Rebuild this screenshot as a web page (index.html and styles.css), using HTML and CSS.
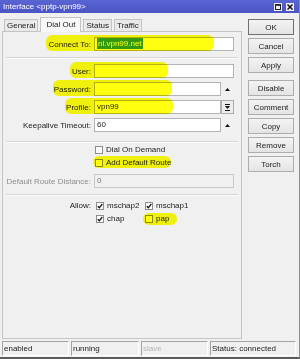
FILE: index.html
```html
<!DOCTYPE html>
<html>
<head>
<meta charset="utf-8">
<link rel="stylesheet" href="styles.css">
</head>
<body>
<div class="win">
  <div class="titlebar">
    <span class="title">Interface &lt;pptp-vpn99&gt;</span>
    <span class="wbtns">
      <span class="wb"><svg width="6" height="6" viewBox="0 0 6 6"><rect x="0.5" y="0.5" width="5" height="5" fill="none" stroke="#222" stroke-width="1"/><line x1="0" y1="1.2" x2="6" y2="1.2" stroke="#222" stroke-width="1.2"/></svg></span>
      <span class="wb"><svg width="6" height="6" viewBox="0 0 6 6"><path d="M0.5 0.5 L5.5 5.5 M5.5 0.5 L0.5 5.5" stroke="#111" stroke-width="1.5"/></svg></span>
    </span>
  </div>
  <div class="body">
    <div class="left">
      <div class="tabs">
        <span class="tab">General</span>
        <span class="tab sel">Dial Out</span>
        <span class="tab">Status</span>
        <span class="tab">Traffic</span>
      </div>
      <div class="panel">
        <div class="row first">
          <span class="lbl">Connect To:</span>
          <span class="inp"><span class="selx">nl.vpn99.net</span></span>
        </div>
        <div class="sep sep1"></div>
        <div class="row r-user">
          <span class="lbl">User:</span>
          <span class="inp"></span>
        </div>
        <div class="row">
          <span class="lbl">Password:</span>
          <span class="inp short"></span>
          <span class="aux"><svg width="5" height="3" viewBox="0 0 5 3"><path d="M0 3 L2.5 0 L5 3 Z" fill="#111"/></svg></span>
        </div>
        <div class="row">
          <span class="lbl">Profile:</span>
          <span class="inp short">vpn99</span>
          <span class="aux abtn"><svg width="5" height="7" viewBox="0 0 5 7"><rect x="0" y="0" width="5" height="1" fill="#111"/><path d="M0 2 L5 2 L2.5 5 Z" fill="#111"/><rect x="0" y="6" width="5" height="1" fill="#111"/></svg></span>
        </div>
        <div class="row">
          <span class="lbl">Keepalive Timeout:</span>
          <span class="inp short">60</span>
          <span class="aux"><svg width="5" height="3" viewBox="0 0 5 3"><path d="M0 3 L2.5 0 L5 3 Z" fill="#111"/></svg></span>
        </div>
        <div class="sep sep2"></div>
        <div class="cbrow">
          <span class="cb"></span><span>Dial On Demand</span>
        </div>
        <div class="cbrow">
          <span class="cb"></span><span>Add Default Route</span>
        </div>
        <div class="row r-drd">
          <span class="lbl dim">Default Route Distance:</span>
          <span class="inp dis">0</span>
        </div>
        <div class="sep sep3"></div>
        <div class="allow">
          <span class="lbl albl">Allow:</span>
          <div class="cbgrid">
            <span class="cbi"><span class="cb"><svg width="6" height="6" viewBox="0 0 6 6"><path d="M0.8 3.2 L2.3 4.8 L5.3 1" fill="none" stroke="#111" stroke-width="1.3"/></svg></span>mschap2</span>
            <span class="cbi"><span class="cb"><svg width="6" height="6" viewBox="0 0 6 6"><path d="M0.8 3.2 L2.3 4.8 L5.3 1" fill="none" stroke="#111" stroke-width="1.3"/></svg></span>mschap1</span>
            <span class="cbi"><span class="cb"><svg width="6" height="6" viewBox="0 0 6 6"><path d="M0.8 3.2 L2.3 4.8 L5.3 1" fill="none" stroke="#111" stroke-width="1.3"/></svg></span>chap</span>
            <span class="cbi"><span class="cb"></span>pap</span>
          </div>
        </div>
      </div>
    </div>
    <div class="side">
      <span class="btn def">OK</span>
      <span class="btn">Cancel</span>
      <span class="btn">Apply</span>
      <span class="btn gapb">Disable</span>
      <span class="btn">Comment</span>
      <span class="btn">Copy</span>
      <span class="btn">Remove</span>
      <span class="btn">Torch</span>
    </div>
  </div>
  <div class="status">
    <span class="seg s1">enabled</span>
    <span class="seg s2">running</span>
    <span class="seg s3 dimt">slave</span>
    <span class="seg s4">Status: connected</span>
  </div>
  <span class="mark m-connect"></span>
  <span class="mark m-user"></span>
  <span class="mark m-pass"></span>
  <span class="mark m-prof"></span>
  <span class="mark m-route"></span>
  <span class="mark m-pap"></span>
</div>
</body>
</html>
```
FILE: styles.css
```css
* { box-sizing: border-box; }
html, body { margin: 0; padding: 0; }
body {
  width: 300px;
  height: 359px;
  overflow: hidden;
  background: #f0f0f0;
  font-family: "Liberation Sans", Arial, sans-serif;
  font-size: 8px;
  color: #1c1c1c;
}
.win {
  position: relative;
  width: 300px;
  height: 359px;
  background: #f0f0f0;
  border-bottom: 2px solid #5c5c5c;
  border-right: 1px solid #8c8c8c;
  display: flex;
  flex-direction: column;
  isolation: isolate;
}
.titlebar {
  height: 13px;
  flex: none;
  background: linear-gradient(#5b64d3, #4a55c3);
  color: #fff;
  display: flex;
  align-items: center;
  padding-left: 3px;
  line-height: 13px;
}
.title { flex: 1; }
.wbtns { display: flex; gap: 4px; margin-right: 5px; }
.wb {
  width: 8px;
  height: 8px;
  background: #ececf2;
  display: flex;
  align-items: center;
  justify-content: center;
}
.body { display: flex; height: 327px; flex: none; }
.left {
  width: 242px;
  padding-left: 2px;
  display: flex;
  flex-direction: column;
}
.tabs {
  height: 18px;
  display: flex;
  align-items: flex-end;
  padding-left: 2px;
  gap: 2px;
}
.tab {
  height: 12px;
  line-height: 11px;
  padding: 0 2px;
  border: 1px solid #c3c3c3;
  border-bottom: none;
  background: #e9e9e9;
}
.tab.sel {
  height: 15px;
  margin-bottom: -1px;
  padding: 1px 5px 0;
  background: #f8f8f8;
  position: relative;
  z-index: 1;
}
.panel {
  height: 308px;
  border: 1px solid #c4c4c4;
  background: #f0f0f0;
  padding: 5px 0 0 0;
}
.row {
  display: flex;
  align-items: center;
  height: 14px;
  margin-top: 4px;
}
.row.first { margin-top: 0; }
.row.r-user { margin-top: 5px; }
.row.r-drd { margin-top: 5px; }
.lbl {
  width: 88px;
  margin-right: 3px;
  text-align: right;
  white-space: nowrap;
}
.lbl.dim { color: #8e8e8e; }
.inp {
  width: 140px;
  height: 14px;
  background: #fff;
  border: 1px solid #b3b3b3;
  padding-left: 2px;
  line-height: 12px;
  white-space: nowrap;
}
.inp.short { width: 127px; }
.inp.dis { background: #f0f0f0; border-color: #c8c8c8; color: #7a7a7a; }
.selx {
  background: #3399ff;
  color: #fff;
  padding: 0 1px;
  display: inline-block;
  line-height: 11px;
}
.aux {
  width: 13px;
  height: 14px;
  display: flex;
  align-items: center;
  justify-content: center;
}
.aux.abtn {
  border: 1px solid #adadad;
  background: #ececec;
}
.sep {
  height: 2px;
  border-top: 1px solid #d6d6d6;
  border-bottom: 1px solid #fbfbfb;
  margin: 0 3px;
}
.sep1 { margin-top: 6px; }
.sep2 { margin-top: 9px; }
.sep3 { margin-top: 6px; }
.cbrow {
  display: flex;
  align-items: center;
  height: 13px;
  padding-left: 92px;
}
.cb {
  width: 8px;
  height: 8px;
  border: 1px solid #8d8d8d;
  background: #fff;
  margin-right: 3px;
  display: inline-flex;
  align-items: center;
  justify-content: center;
  flex: none;
}
.allow {
  display: flex;
  margin-top: 3px;
}
.albl { margin-right: 5px; height: 13px; line-height: 13px; }
.cbgrid {
  display: grid;
  grid-template-columns: 49px 60px;
  grid-auto-rows: 13px;
}
.cbi { display: flex; align-items: center; }
.side {
  padding: 6px 0 0 6px;
  display: flex;
  flex-direction: column;
  gap: 3px;
}
.btn {
  width: 46px;
  height: 16px;
  border: 1px solid #adadad;
  background: linear-gradient(#f3f3f3, #e4e4e4);
  display: flex;
  align-items: center;
  justify-content: center;
}
.btn.def { border-color: #707070; }
.btn.gapb { margin-top: 4px; }
.status {
  display: flex;
  gap: 2px;
  padding: 1px 0 0 2px;
  height: 17px;
  flex: none;
}
.seg {
  height: 15px;
  border: 1px solid;
  border-color: #a3a3a3 #ffffff #ffffff #a3a3a3;
  padding-left: 1px;
  line-height: 13px;
  white-space: nowrap;
}
.s1 { width: 67px; }
.s2 { width: 68px; }
.s3 { width: 67px; }
.s4 { width: 86px; }
.dimt { color: #b4b4b4; }
.mark {
  position: absolute;
  background: #ffff10;
  mix-blend-mode: multiply;
  border-radius: 6px;
  z-index: 5;
}
.m-connect { left: 46px; top: 35px; width: 168px; height: 16px; }
.m-user { left: 70px; top: 62px; width: 98px; height: 16px; }
.m-pass { left: 53px; top: 80px; width: 119px; height: 16px; }
.m-prof { left: 65px; top: 98px; width: 108px; height: 16px; }
.m-route { left: 93px; top: 156px; width: 78px; height: 12px; }
.m-pap { left: 143px; top: 213px; width: 34px; height: 12px; }
```
